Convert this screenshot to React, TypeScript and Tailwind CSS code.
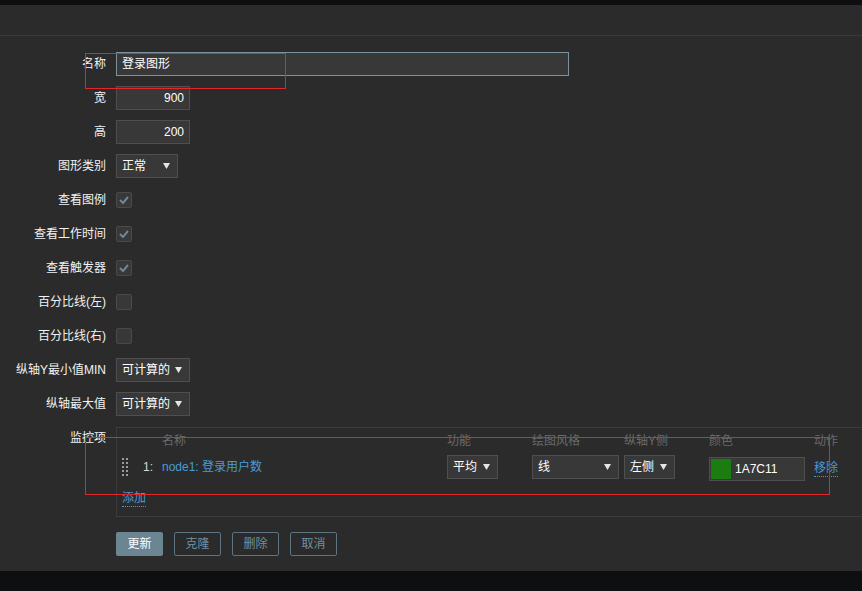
import React from 'react'

const Arrow = () => (
  <svg width="7" height="6" viewBox="0 0 7 6" className="shrink-0">
    <path d="M0 0h7L3.5 6z" fill="#e6e6e6" />
  </svg>
)

function Select({ value, className }: { value: string; className: string }) {
  return (
    <div className={`flex h-6 items-center justify-between border border-[#4f4f4f] bg-[#383838] pl-[5px] pr-[7px] text-white ${className}`}>
      <span>{value}</span>
      <Arrow />
    </div>
  )
}

function Check({ on }: { on?: boolean }) {
  return (
    <div className="flex h-4 w-4 items-center justify-center rounded-[2px] border border-[#4a4a4a] bg-[#383838]">
      {on && (
        <svg width="10" height="8" viewBox="0 0 10 8">
          <path d="M1 4l3 3 5-6" stroke="#6f8794" strokeWidth="2" fill="none" />
        </svg>
      )}
    </div>
  )
}

function Row({ label, children }: { label: string; children: React.ReactNode }) {
  return (
    <div className="mb-[10px] flex h-6 items-center gap-[10px]">
      <div className="w-[106px] text-right text-[#f2f2f2]">{label}</div>
      {children}
    </div>
  )
}

function Handle() {
  return (
    <svg width="8" height="19" viewBox="0 0 8 19">
      {[0, 4, 8, 12, 16].map((y) => (
        <g key={y} fill="#9a9a9a">
          <rect x="0" y={y} width="2" height="2" />
          <rect x="4" y={y} width="2" height="2" />
        </g>
      ))}
    </svg>
  )
}

export default function App() {
  return (
    <div className="relative flex h-[591px] w-[862px] flex-col overflow-hidden bg-[#2b2b2b] font-['Liberation_Sans','Noto_Sans_CJK_SC',sans-serif] text-[12px] leading-4">
      <div className="h-[5px] bg-[#0e0f11]" />
      <div className="h-[31px] border-b border-[#3a3a3a]" />

      <div className="flex-1 pt-[16px]">
        <Row label="名称">
          <div className="flex h-6 w-[453px] items-center border border-[#7c929f] bg-[#383838] pl-[5px] text-white">登录图形</div>
        </Row>
        <Row label="宽">
          <div className="flex h-6 w-[74px] items-center justify-end border border-[#4f4f4f] bg-[#383838] pr-[5px] text-white">900</div>
        </Row>
        <Row label="高">
          <div className="flex h-6 w-[74px] items-center justify-end border border-[#4f4f4f] bg-[#383838] pr-[5px] text-white">200</div>
        </Row>
        <Row label="图形类别">
          <Select value="正常" className="w-[62px]" />
        </Row>
        <Row label="查看图例">
          <Check on />
        </Row>
        <Row label="查看工作时间">
          <Check on />
        </Row>
        <Row label="查看触发器">
          <Check on />
        </Row>
        <Row label="百分比线(左)">
          <Check />
        </Row>
        <Row label="百分比线(右)">
          <Check />
        </Row>
        <Row label="纵轴Y最小值MIN">
          <Select value="可计算的" className="w-[74px]" />
        </Row>
        <Row label="纵轴最大值">
          <Select value="可计算的" className="w-[74px]" />
        </Row>

        {/* 监控项 */}
        <div className="flex items-start gap-[10px]">
          <div className="w-[106px] pt-[4px] text-right text-[#f2f2f2]">监控项</div>
          <div className="mt-[1px] h-[90px] flex-1 border border-r-0 border-[#3c3c3c] pl-[5px]">
            <div className="grid h-[22px] grid-cols-[21px_19px_285px_85px_92px_85px_105px_1fr] items-end pb-[1px] text-[#6a6a6a]">
              <span />
              <span />
              <span>名称</span>
              <span>功能</span>
              <span>绘图风格</span>
              <span>纵轴Y侧</span>
              <span>颜色</span>
              <span>动作</span>
            </div>
            <div className="mt-[3px] grid h-6 grid-cols-[21px_19px_285px_85px_92px_85px_105px_1fr] items-center">
              <Handle />
              <span className="text-[#d8d8d8]">1:</span>
              <span className="text-[#4a9bd3]">node1: 登录用户数</span>
              <Select value="平均" className="w-[51px]" />
              <Select value="线" className="w-[87px]" />
              <Select value="左侧" className="w-[51px]" />
              <div className="mt-[4px] flex h-6 w-[96px] items-center border border-[#4f4f4f] bg-[#383838] pl-[1px]">
                <div className="h-5 w-5 bg-[#1a7c11]" />
                <span className="ml-[4px] text-white">1A7C11</span>
              </div>
              <span className="mt-[2px] w-fit border-b border-dotted border-[#4a9bd3] text-[#4a9bd3]">移除</span>
            </div>
            <div className="mt-[14px] w-fit border-b border-dotted border-[#4a9bd3] leading-[15px] text-[#4a9bd3]">添加</div>
          </div>
        </div>

        <div className="ml-[116px] mt-[15px] flex gap-[11px]">
          <button className="h-6 w-[47px] rounded-[2px] bg-[#6c8593] text-white">更新</button>
          <button className="h-6 w-[47px] rounded-[2px] border border-[#5c7382] text-[#6f90a3]">克隆</button>
          <button className="h-6 w-[47px] rounded-[2px] border border-[#5c7382] text-[#6f90a3]">删除</button>
          <button className="h-6 w-[47px] rounded-[2px] border border-[#5c7382] text-[#6f90a3]">取消</button>
        </div>
      </div>

      <div className="h-[20px] bg-[#0e0f11]" />

      {/* annotation boxes */}
      <div className="absolute left-[85px] top-[53px] h-[36px] w-[201px] border border-[#e3262a]" />
      <div className="absolute left-[85px] top-[437px] h-[58px] w-[745px] border border-[#e3262a]" />
    </div>
  )
}
